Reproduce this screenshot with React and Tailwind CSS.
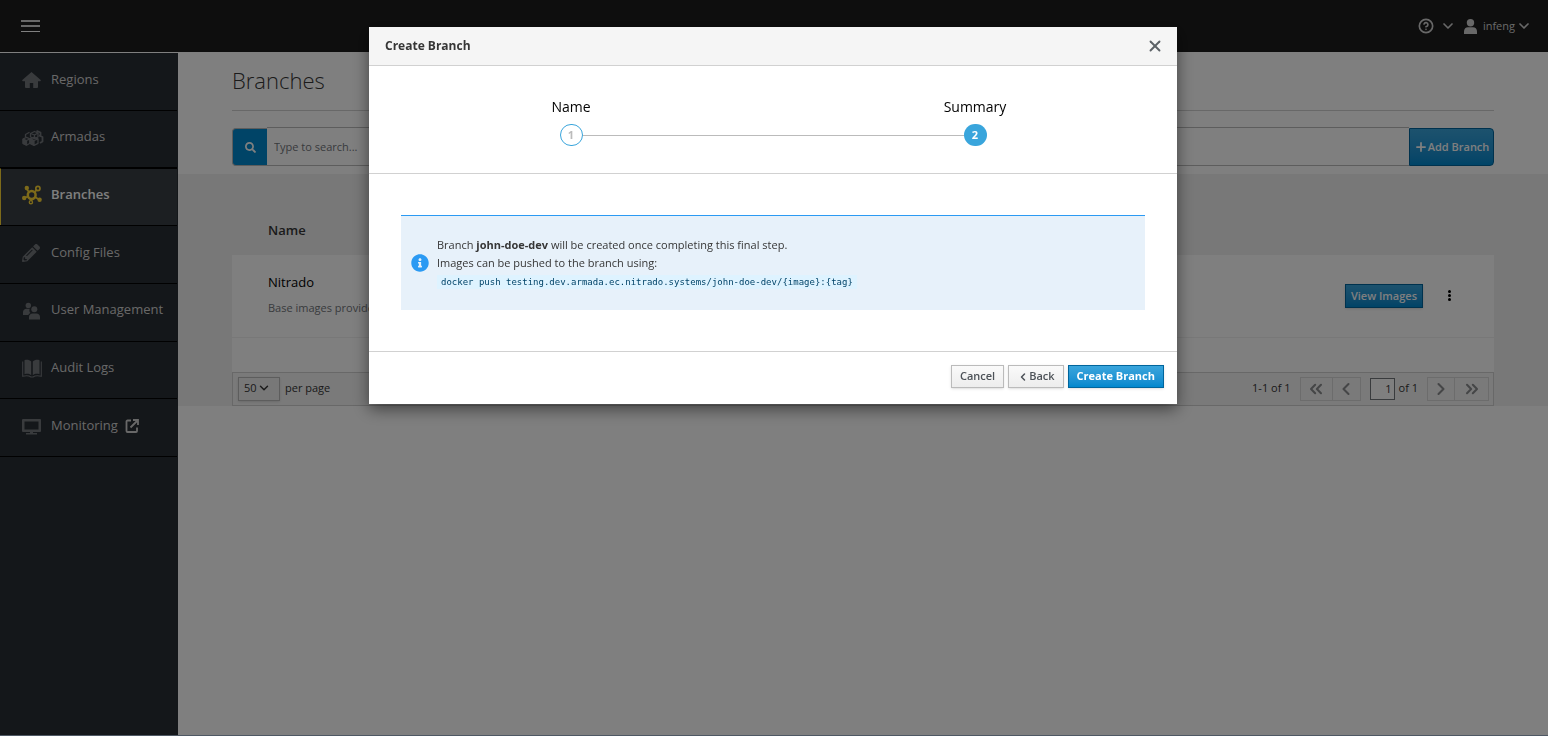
import { FaSearch, FaPencilAlt, FaInfoCircle } from 'react-icons/fa';
import { HelpCircle, ChevronsLeft, ChevronLeft, ChevronsRight, ChevronRight, ChevronDown, X, Plus } from 'lucide-react';

function HomeIcon() {
  return (
    <svg viewBox="0 0 19 16" width="19" height="16" fill="currentColor">
      <path d="M9.500 0L19 8.300l-.8 1H16V15a1 1 0 01-1 1h-3.800v-5H7.800v5H4a1 1 0 01-1-1V9.300H.8l-.8-1z" />
    </svg>
  );
}

function CubesIcon() {
  return (
    <svg viewBox="0 0 22 17" width="22" height="17" fill="none" stroke="currentColor" strokeWidth="1.3" strokeLinejoin="round">
      <path d="M8.500 3.500l4-2 3.500 1.500v4l-3.500 1.700-4-1.700z" />
      <path d="M8.500 3.500l4 1.500L16 3M12.500 5v3.500" />
      <path d="M14.500.9l4 1.600v3.500M17 5.500l3.500 1.500v4.500L18 13" strokeWidth="1.800" />
      <path d="M1 9l3.500-1.700L8 8.800v4.500l-3.500 1.900L1 13.500z" />
      <path d="M1 9l3.500 1.500L8 8.800M4.500 10.500v4.500" />
      <path d="M8 8.800l4-1.500 4 1.500v4.500l-4 2-4-2z" />
      <path d="M8 8.800l4 1.700 4-1.700" />
      <path d="M8.300 9.200l3.700 1.600v4.200l-3.700-1.800z" fill="currentColor" />
      <path d="M1.300 9.500l3 1.300v4l-3-1.500z" fill="currentColor" />
      <path d="M3.500 7V4.500l4-2.200" />
    </svg>
  );
}

function TopologyIcon() {
  return (
    <svg viewBox="0 0 20 20" width="20" height="20" fill="none" stroke="currentColor" strokeWidth="1.8">
      <circle cx="9.7" cy="10" r="3.900" strokeWidth="2.500" />
      <path d="M7 7L5 4.500M12.500 7.300l2.500-3M6 11.500l-3.500 1.300M13 12l4 2.500M9.500 14v2" />
      <circle cx="4.800" cy="3" r="2.200" fill="currentColor" stroke="none" />
      <circle cx="2.200" cy="13" r="2.200" fill="currentColor" stroke="none" />
      <circle cx="17.600" cy="14.700" r="2.200" fill="currentColor" stroke="none" />
      <circle cx="15.900" cy="3.500" r="2.100" strokeWidth="1.700" />
      <circle cx="8.900" cy="17.200" r="1.600" strokeWidth="1.400" />
    </svg>
  );
}

function UsersIcon() {
  return (
    <svg viewBox="0 0 20 18" width="20" height="18" fill="currentColor">
      <circle cx="6.300" cy="3.400" r="2.700" />
      <path d="M1 12.500V10c0-2 1.500-3.300 3.500-3.300h3.200c-.8 2 0 3.600 1 4.400-1.200.5-2 1.100-2.400 1.900H1z" />
      <circle cx="12.300" cy="7.300" r="3" />
      <path d="M7 17.500V15c0-2 1.600-3.400 3.600-3.400h3.800c2 0 3.600 1.400 3.600 3.400v2.500z" />
    </svg>
  );
}

function BookIcon() {
  return (
    <svg viewBox="0 0 20 19" width="20" height="19" fill="currentColor">
      <path d="M2.500 1.200C5 .3 7.500 1 9.200 2.500v13.700C7.300 14.700 5 14.600 2.500 15.200z" />
      <path d="M17.500 1.200C15 .3 12.500 1 10.800 2.500v13.700c1.900-1.500 4.200-1.600 6.700-1z" />
      <path d="M.7 2.500v14.800c3-.9 6-.9 8.300.7h2c2.300-1.600 5.300-1.600 8.300-.7V2.500" fill="none" stroke="currentColor" strokeWidth="1.100" />
    </svg>
  );
}

function ScreenIcon() {
  return (
    <svg viewBox="0 0 19 16" width="19" height="16" fill="currentColor">
      <path fillRule="evenodd" d="M1 0h17a1 1 0 011 1v11a1 1 0 01-1 1H1a1 1 0 01-1-1V1a1 1 0 011-1zM2.500 2.500v8h14v-8z" />
      <path d="M8 13h3v1h4v1.500H4V14h4z" />
    </svg>
  );
}

function ExternalIcon() {
  return (
    <svg viewBox="0 0 14 14" width="14" height="14" fill="none" stroke="currentColor" strokeWidth="1.800">
      <path d="M6 1.500H2.500a1 1 0 00-1 1v9.500a1 1 0 001 1H11a1 1 0 001-1V8.500" />
      <path d="M8 1h5v5M13 1L5.500 8.500" />
    </svg>
  );
}

function UserIcon() {
  return (
    <svg viewBox="0 0 13 15" width="13" height="15" fill="currentColor">
      <circle cx="6.500" cy="3.700" r="3.700" />
      <path d="M0 15v-2.500C0 9.800 1.800 8.300 4 8.300h5c2.200 0 4 1.500 4 4.200V15z" />
    </svg>
  );
}

const navItems = [
  { label: 'Regions', icon: <HomeIcon /> },
  { label: 'Armadas', icon: <CubesIcon /> },
  { label: 'Branches', icon: <TopologyIcon />, active: true },
  { label: 'Config Files', icon: <FaPencilAlt size={18} /> },
  { label: 'User Management', icon: <UsersIcon /> },
  { label: 'Audit Logs', icon: <BookIcon /> },
  { label: 'Monitoring', icon: <ScreenIcon />, external: true },
];

function Header() {
  return (
    <header className="flex h-[52px] items-center justify-between bg-[#1d1d1d] pl-[21px] pr-4 text-[#d1d1d1]">
      <button aria-label="Toggle navigation" className="flex w-[19px] flex-col gap-[3px]">
        <span className="h-0.5 w-full bg-[#d1d1d1]" />
        <span className="h-0.5 w-full bg-[#d1d1d1]" />
        <span className="mt-px h-px w-full bg-white" />
      </button>
      <div className="flex items-center gap-2">
        <button aria-label="Help" className="flex items-center gap-1.5">
          <HelpCircle size={16} strokeWidth={2.5} />
          <ChevronDown size={16} strokeWidth={2.5} />
        </button>
        <button className="flex items-center text-[11px]">
          <UserIcon />
          <span className="ml-1.5 mr-px">infeng</span>
          <ChevronDown size={16} strokeWidth={2.5} />
        </button>
      </div>
    </header>
  );
}

function Sidebar() {
  return (
    <nav className="w-[178px] shrink-0 border-r border-[#292e34] bg-[#292e34]">
      <ul className="grid h-[404px] grid-rows-7">
        {navItems.map((item) => (
          <li key={item.label} className="border-b border-[#030303]">
            <a
              href="#"
              className={
                item.active
                  ? 'flex h-full items-center border-l border-t border-l-[#fbd534] border-t-[#030303] bg-[#393f44] pb-1.5 pl-[21px] text-[13px] font-semibold text-white'
                  : 'flex h-full items-center pb-1 pl-[22px] text-[13px] text-[#d1d1d1]'
              }
            >
              <span className={item.active ? 'mt-0.5 flex w-[29px] text-[#fbd534]' : 'mt-0.5 flex w-[29px] text-[#72767b]'}>
                {item.icon}
              </span>
              {item.label}
              {item.external && <span className="ml-[7px]"><ExternalIcon /></span>}
            </a>
          </li>
        ))}
      </ul>
    </nav>
  );
}

function Pagination() {
  return (
    <div className="flex h-[34px] items-center justify-between border border-[#d1d1d1] bg-[#f5f5f5] pl-[5px] pr-1 text-[11px] text-[#363636]">
      <div className="flex items-center gap-[5px]">
        <div className="relative">
          <select
            aria-label="Items per page"
            className="h-6 w-[42px] appearance-none border border-[#bbb] bg-[#f1f1f1] pl-[5px] text-[11px] shadow-sm"
          >
            <option>50</option>
          </select>
          <ChevronDown size={14} strokeWidth={2.5} className="pointer-events-none absolute right-[9px] top-1" />
        </div>
        <span>per page</span>
      </div>
      <div className="flex items-center">
        <span className="mr-[9px]">1-1 of 1</span>
        <button aria-label="First page" className="flex h-6 w-[33px] items-center justify-center border border-[#d8d8d8] text-[#8b8d8f]">
          <ChevronsLeft size={20} strokeWidth={2.5} />
        </button>
        <button aria-label="Previous page" className="flex h-6 w-7 items-center justify-center border border-l-0 border-[#d8d8d8] text-[#8b8d8f]">
          <ChevronLeft size={20} strokeWidth={2.5} />
        </button>
        <input
          aria-label="Current page"
          defaultValue="1"
          className="ml-[9px] h-[22px] w-[25px] border border-[#72767b] bg-white pr-0.5 text-right text-[11px]"
        />
        <span className="ml-1 mr-[9px]">of 1</span>
        <button aria-label="Next page" className="flex h-6 w-7 items-center justify-center border border-[#d8d8d8] text-[#8b8d8f]">
          <ChevronRight size={20} strokeWidth={2.5} />
        </button>
        <button aria-label="Last page" className="flex h-6 w-[34px] items-center justify-center border border-l-0 border-[#d8d8d8] text-[#8b8d8f]">
          <ChevronsRight size={20} strokeWidth={2.5} />
        </button>
      </div>
    </div>
  );
}

function BranchesPage() {
  return (
    <main className="min-w-0 flex-1">
      <div className="px-[54px] pb-2">
        <h1 className="border-b border-[#d1d1d1] pb-[13px] pt-[11px] text-[22px] font-light leading-[34px] text-[#363636]">Branches</h1>
        <div className="mt-4 flex h-[39px]">
          <button aria-label="Search" className="mt-px flex w-[35px] items-center justify-center rounded-l border border-[#bbb] border-r-0 bg-[#0088ce] text-white">
            <FaSearch size={11} />
          </button>
          <input
            aria-label="Search branches"
            placeholder="Type to search..."
            className="min-w-0 flex-1 border-y border-[#bbb] bg-white px-[7px] pt-0.5 text-[11px] placeholder:text-[#72767b]"
          />
          <button className="mt-px flex w-[85px] items-center justify-center rounded-r border border-[#00659c] bg-linear-to-b from-[#39a5dc] to-[#0088ce] text-[11px] font-semibold text-white">
            <Plus size={14} strokeWidth={3} />
            Add Branch
          </button>
        </div>
      </div>

      <section className="bg-[#f1f1f1] px-[54px]">
        <table className="w-full text-left">
          <thead>
            <tr>
              <th className="h-[81px] pl-9 pt-8 text-[13px] font-semibold text-[#363636]">Name</th>
              <th aria-label="Actions" />
            </tr>
          </thead>
          <tbody className="bg-white">
            <tr className="h-[82px] border-b border-[#f1f1f1]">
              <td className="pb-0.5 pl-9">
                <div className="text-[13px] leading-5 text-black">Nitrado</div>
                <div className="mt-1.5 text-[11px] leading-5 text-[#72767b]">Base images provided by Nitrado</div>
              </td>
              <td className="pr-[39px]">
                <div className="flex items-center justify-end gap-[20px]">
                  <button className="h-6 border border-[#00659c] bg-linear-to-b from-[#39a5dc] to-[#0088ce] px-[5px] text-[11px] font-semibold text-white shadow-sm">
                    View Images
                  </button>
                  <button aria-label="More actions" className="flex w-3 flex-col items-center gap-px">
                    <span className="size-[3px] rounded-full bg-black" />
                    <span className="size-[3px] rounded-full bg-black" />
                    <span className="size-[3px] rounded-full bg-black" />
                  </button>
                </div>
              </td>
            </tr>
          </tbody>
        </table>
        <div className="h-[34px] bg-white" />
        <Pagination />
      </section>
    </main>
  );
}

function Step({ number, label, current, first, last }) {
  return (
    <li className="flex flex-col items-center">
      <span className="mb-[7px] text-sm leading-5 text-[#030303]">{label}</span>
      <div className="flex w-full items-center">
        <span className={first ? 'h-px flex-1' : 'h-px flex-1 bg-[#bbb]'} />
        <span
          className={
            current
              ? 'flex h-[22px] w-[23px] items-center justify-center rounded-full bg-[#39a5dc] text-[11px] font-bold text-white'
              : 'flex h-[22px] w-[23px] items-center justify-center rounded-full border border-[#39a5dc] text-[11px] font-bold text-[#bbb]'
          }
        >
          {number}
        </span>
        <span className={last ? 'h-px flex-1' : 'h-px flex-1 bg-[#bbb]'} />
      </div>
    </li>
  );
}

function CreateBranchModal() {
  const plainButton =
    'flex h-[23px] items-center border border-[#bbb] bg-linear-to-b from-[#fafafa] to-[#ededed] px-2 text-[11px] font-semibold text-[#4d5258] shadow-sm';

  return (
    <div className="fixed inset-0 bg-black/50 pr-0.5 pt-[27px]">
      <div
        role="dialog"
        aria-labelledby="modal-title"
        className="mx-auto w-[808px] max-w-full bg-white shadow-[0_5px_15px_rgba(0,0,0,0.5)]"
      >
        <div className="flex h-[39px] items-center justify-between border-b border-[#d1d1d1] bg-[#f5f5f5] pl-4 pr-[13px]">
          <h4 id="modal-title" className="text-xs font-bold text-[#363636]">Create Branch</h4>
          <button aria-label="Close" className="text-[#5c6166]">
            <X size={18} strokeWidth={2.5} />
          </button>
        </div>

        <ol className="grid grid-cols-2 border-b border-[#d1d1d1] pb-[27px] pt-[31px]">
          <Step number={1} label="Name" first />
          <Step number={2} label="Summary" current last />
        </ol>

        <div className="px-8 py-[41px]">
          <div className="flex items-center border-t border-[#2b9af3] bg-[#e7f1fa] px-[10px] py-5 text-[11px] leading-[18px] text-[#363636]">
            <FaInfoCircle size={18} className="mr-2 shrink-0 text-[#2b9af3]" />
            <div>
              <p>
                Branch <strong>john-doe-dev</strong> will be created once completing this final step.
              </p>
              <p>Images can be pushed to the branch using:</p>
              <code className="mt-[3px] mb-px block w-fit bg-[#def3ff] px-1 font-['DejaVu_Sans_Mono',monospace] text-[9px] leading-[14px] text-[#004368]">
                docker push testing.dev.armada.ec.nitrado.systems/john-doe-dev/{'{image}:{tag}'}
              </code>
            </div>
          </div>
        </div>

        <div className="flex justify-end gap-1 border-t border-[#d1d1d1] px-[13px] pb-4 pt-[13px]">
          <button className={plainButton}>Cancel</button>
          <button className={plainButton}>
            <ChevronLeft size={12} strokeWidth={3} />
            Back
          </button>
          <button className="flex h-[23px] items-center border border-[#00659c] bg-linear-to-b from-[#39a5dc] to-[#0088ce] px-2 text-[11px] font-bold text-white shadow-sm">
            Create Branch
          </button>
        </div>
      </div>
    </div>
  );
}

export default function App() {
  return (
    <div className="flex min-h-screen flex-col bg-white font-['Open_Sans',sans-serif]">
      <Header />
      <div className="flex flex-1 border-b border-[#9cb0c8]">
        <div className="flex pt-px">
          <Sidebar />
        </div>
        <BranchesPage />
      </div>
      <CreateBranchModal />
    </div>
  );
}
